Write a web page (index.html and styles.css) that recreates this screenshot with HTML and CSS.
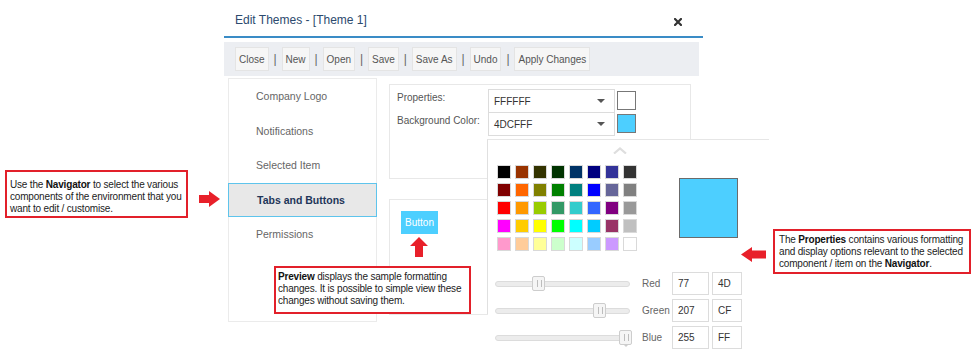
FILE: index.html
```html
<!DOCTYPE html>
<html>
<head>
<meta charset="utf-8">
<title>Edit Themes</title>
<link rel="stylesheet" href="styles.css">
</head>
<body>
<div class="dialog">
  <div class="header">
    <span class="title">Edit Themes - [Theme 1]</span>
    <svg class="close" width="8" height="8" viewBox="0 0 8 8"><path d="M1 1L7 7M7 1L1 7" stroke="#333" stroke-width="2.2" stroke-linecap="square"/></svg>
  </div>
  <div class="toolbar">
    <button class="tb">Close</button><span class="sep">|</span>
    <button class="tb">New</button><span class="sep">|</span>
    <button class="tb">Open</button><span class="sep">|</span>
    <button class="tb">Save</button><span class="sep">|</span>
    <button class="tb">Save As</button><span class="sep">|</span>
    <button class="tb">Undo</button><span class="sep">|</span>
    <button class="tb">Apply Changes</button>
  </div>
  <div class="content">
    <nav class="nav">
      <div class="nav-item">Company Logo</div>
      <div class="nav-item">Notifications</div>
      <div class="nav-item">Selected Item</div>
      <div class="nav-item active">Tabs and Buttons</div>
      <div class="nav-item">Permissions</div>
    </nav>
    <div class="main">
      <div class="props">
        <div class="prop-row">
          <span class="prop-label">Properties:</span>
          <div class="select">FFFFFF<span class="caret"></span></div>
          <span class="swatch white"></span>
        </div>
        <div class="prop-row">
          <span class="prop-label">Background Color:</span>
          <div class="select">4DCFFF<span class="caret"></span></div>
          <span class="swatch blue"></span>
        </div>
      </div>
      <div class="preview">
        <span class="pbtn">Button</span>
      </div>
    </div>
  </div>
  <div class="popup">
    <svg class="chev" width="14" height="7" viewBox="0 0 14 7"><path d="M1 6.5L7 1.5L13 6.5" fill="none" stroke="#dedede" stroke-width="2.2"/></svg>
    <div class="top-row">
      <div class="palette">
        <span style="background:#000000"></span><span style="background:#993300"></span><span style="background:#333300"></span><span style="background:#003300"></span><span style="background:#003366"></span><span style="background:#000080"></span><span style="background:#333399"></span><span style="background:#333333"></span>
        <span style="background:#800000"></span><span style="background:#FF6600"></span><span style="background:#808000"></span><span style="background:#008000"></span><span style="background:#008080"></span><span style="background:#0000FF"></span><span style="background:#666699"></span><span style="background:#808080"></span>
        <span style="background:#FF0000"></span><span style="background:#FF9900"></span><span style="background:#99CC00"></span><span style="background:#339966"></span><span style="background:#33CCCC"></span><span style="background:#3366FF"></span><span style="background:#800080"></span><span style="background:#999999"></span>
        <span style="background:#FF00FF"></span><span style="background:#FFCC00"></span><span style="background:#FFFF00"></span><span style="background:#00FF00"></span><span style="background:#00FFFF"></span><span style="background:#00CCFF"></span><span style="background:#993366"></span><span style="background:#C0C0C0"></span>
        <span style="background:#FF99CC"></span><span style="background:#FFCC99"></span><span style="background:#FFFF99"></span><span style="background:#CCFFCC"></span><span style="background:#CCFFFF"></span><span style="background:#99CCFF"></span><span style="background:#CC99FF"></span><span style="background:#FFFFFF"></span>
      </div>
      <div class="big-swatch"></div>
    </div>
    <div class="sliders">
      <div class="srow">
        <div class="track"><span class="handle" style="left:36px"></span></div>
        <span class="slabel">Red</span>
        <span class="inp">77</span><span class="inp inp2">4D</span>
      </div>
      <div class="srow">
        <div class="track"><span class="handle" style="left:97px"></span></div>
        <span class="slabel">Green</span>
        <span class="inp">207</span><span class="inp inp2">CF</span>
      </div>
      <div class="srow">
        <div class="track"><span class="handle pointer" style="left:123px"></span></div>
        <span class="slabel">Blue</span>
        <span class="inp">255</span><span class="inp inp2">FF</span>
      </div>
    </div>
  </div>
</div>

<div class="callout callout-nav">Use the <b>Navigator</b> to select the various<br>components of the environment that you<br>want to edit / customise.</div>
<svg class="arrow arrow-right" width="21" height="16" viewBox="0 0 21 16"><polygon points="0,4 10,4 10,0 21,8 10,16 10,12 0,12" fill="#e8202a"/></svg>

<div class="callout callout-preview"><b>Preview</b> displays the sample formatting<br>changes. It is possible to simple view these<br>changes without saving them.</div>
<svg class="arrow arrow-up" width="18" height="20" viewBox="0 0 18 20"><polygon points="9,0 18,9 13,9 13,20 5,20 5,9 0,9" fill="#e8202a"/></svg>

<div class="callout callout-props">The <b>Properties</b> contains various formatting<br>and display options relevant to the selected<br>component / item on the <b>Navigator</b>.</div>
<svg class="arrow arrow-left" width="25" height="15" viewBox="0 0 25 15"><polygon points="0,7.5 11,0 11,3.5 25,3.5 25,11.5 11,11.5 11,15" fill="#e8202a"/></svg>
</body>
</html>
```
FILE: styles.css
```css
* { box-sizing: border-box; }

body {
  margin: 0;
  width: 978px;
  height: 360px;
  overflow: hidden;
  position: relative;
  background: #fff;
  font-family: "Liberation Sans", Arial, sans-serif;
}

.dialog {
  position: relative;
  margin-left: 224px;
  width: 479px;
}

.header {
  height: 38px;
  border-bottom: 2px solid #3a8cc6;
  display: flex;
  align-items: flex-start;
  padding: 13px 21px 0 11px;
}

.title {
  font-size: 12px;
  line-height: 14px;
  color: #2c4a6e;
}

.close {
  margin-left: auto;
  margin-top: 5px;
  display: block;
}

.toolbar {
  margin-top: 4px;
  width: 475px;
  height: 34px;
  background: #eceef2;
  padding: 5px 0 0 11px;
  display: flex;
  align-items: flex-start;
}

.tb {
  height: 24px;
  padding: 0 3px;
  margin: 0;
  border: 1px solid #e4e4e4;
  background: #f6f6f6;
  font: 10px "Liberation Sans", Arial, sans-serif;
  color: #555;
}

.sep {
  width: 13px;
  text-align: center;
  font-size: 12px;
  line-height: 24px;
  color: #666;
}

.content {
  display: flex;
  align-items: flex-start;
}

.nav {
  margin: 2px 0 0 4px;
  width: 149px;
  height: 244px;
  border: 1px solid #ebebeb;
}

.nav-item {
  height: 34.5px;
  padding-left: 27px;
  display: flex;
  align-items: center;
  font-size: 10.5px;
  color: #666;
}

.nav-item.active {
  margin: 0 -1px;
  padding-left: 28px;
  background: #e8e8e8;
  border: 1px solid #5ec4ec;
  font-weight: bold;
  color: #1f3659;
}

.main {
  margin: 8px 0 0 12px;
}

.props {
  width: 302px;
  height: 95px;
  border: 1px solid #e8e8e8;
  padding: 4px 0 0 7px;
}

.prop-row {
  display: flex;
  align-items: flex-start;
}

.prop-row + .prop-row {
  margin-top: -1px;
}

.prop-label {
  width: 91px;
  padding-top: 3px;
  font-size: 10px;
  color: #555;
}

.select {
  width: 127px;
  height: 24px;
  border: 1px solid #dcdcdc;
  display: flex;
  align-items: center;
  padding-left: 5px;
  font-size: 10px;
  color: #333;
  background: #fff;
}

.caret {
  margin-left: auto;
  margin-right: 9px;
  width: 0;
  height: 0;
  border-left: 4px solid transparent;
  border-right: 4px solid transparent;
  border-top: 4px solid #555;
}

.swatch {
  width: 19px;
  height: 19px;
  margin: 2px 0 0 2px;
  border: 1px solid #777;
}

.swatch.white { background: #fff; }
.swatch.blue { background: #4dcfff; }

.preview {
  margin-top: 20px;
  width: 99px;
  height: 116px;
  border: 1px solid #e8e8e8;
  padding: 11px 0 0 11px;
}

.pbtn {
  display: block;
  width: 37px;
  height: 23px;
  background: #4dcfff;
  color: #fff;
  font-size: 10px;
  line-height: 23px;
  text-align: center;
}

.popup {
  position: absolute;
  left: 263px;
  top: 139px;
  width: 282px;
  height: 175px;
  background: #fff;
  border-top: 1px solid #e6e6e6;
  border-left: 1px solid #e0e0e0;
  padding: 7px 0 0 9px;
  z-index: 2;
}

.chev {
  display: block;
  margin-left: 116px;
}

.top-row {
  display: flex;
  align-items: flex-start;
  margin-top: 11px;
}

.palette {
  display: grid;
  grid-template-columns: repeat(8, 14px);
  grid-auto-rows: 14px;
  gap: 4px;
}

.palette span {
  border: 1px solid #d9d9d9;
}

.big-swatch {
  width: 59px;
  height: 60px;
  margin: 13px 0 0 42px;
  background: #4dcfff;
  border: 1px solid #6b6b6b;
}

.sliders {
  margin-top: 21px;
}

.srow {
  display: flex;
  align-items: center;
  height: 23px;
}

.srow + .srow {
  margin-top: 4px;
}

.track {
  position: relative;
  width: 135px;
  height: 6px;
  margin-left: -2px;
  border: 1px solid #dcdcdc;
  background: #ececec;
  border-radius: 3px;
}

.handle {
  position: absolute;
  top: -6px;
  width: 13px;
  height: 15px;
  background: #f5f5f5;
  border: 1px solid #cdcdcd;
  border-radius: 2px;
}

.handle::before {
  content: "";
  position: absolute;
  left: 4px;
  top: 3px;
  width: 3px;
  height: 7px;
  border-left: 1px solid #bdbdbd;
  border-right: 1px solid #bdbdbd;
}

.handle.pointer::after {
  content: "";
  position: absolute;
  left: 3px;
  top: 13px;
  width: 0;
  height: 0;
  border-left: 3px solid transparent;
  border-right: 3px solid transparent;
  border-top: 3px solid #cdcdcd;
}

.slabel {
  margin-left: 12px;
  width: 30px;
  font-size: 10px;
  color: #666;
}

.inp {
  width: 37px;
  height: 23px;
  border: 1px solid #dcdcdc;
  display: flex;
  align-items: center;
  padding-left: 5px;
  font-size: 10px;
  color: #333;
}

.inp2 {
  width: 30px;
  margin-left: 3px;
}

.callout {
  position: absolute;
  z-index: 3;
  background: #fff;
  border: 2px solid #e2202a;
  font-size: 10px;
  line-height: 12px;
  letter-spacing: -0.18px;
  color: #1c1c1c;
  white-space: nowrap;
}

.callout b { color: #111; }

.callout-nav {
  left: 5px;
  top: 170px;
  width: 183px;
  height: 48px;
  padding: 7px 0 0 3px;
}

.callout-preview {
  left: 274px;
  top: 266px;
  width: 197px;
  height: 48px;
  padding: 3px 0 0 2px;
}

.callout-props {
  left: 773px;
  top: 229px;
  width: 198px;
  height: 45px;
  padding: 3px 0 0 4px;
}

.arrow {
  position: absolute;
  z-index: 3;
  display: block;
}

.arrow-right { left: 199px; top: 191px; }
.arrow-up { left: 410px; top: 237px; }
.arrow-left { left: 741px; top: 247px; }
```
